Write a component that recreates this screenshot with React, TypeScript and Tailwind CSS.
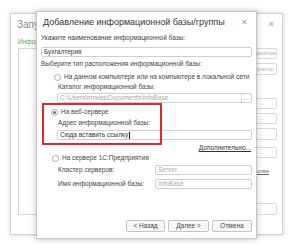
const FONT = { fontFamily: '"Liberation Sans", Arial, sans-serif' };

function Radio({ checked }: { checked?: boolean }) {
  return (
    <span className="flex h-[7px] w-[7px] shrink-0 items-center justify-center rounded-full border border-[#a9a9a9] bg-white">
      {checked && <span className="h-[3px] w-[3px] rounded-full bg-[#3d8f46]" />}
    </span>
  );
}

function Field({ children, muted, className = "" }: { children?: React.ReactNode; muted?: boolean; className?: string }) {
  return (
    <div
      className={`flex h-[10px] items-center overflow-hidden whitespace-nowrap rounded-[2px] border border-[#cfcfcf] bg-white pl-[2px] text-[6.5px] ${
        muted ? "text-[#a8a8a8]" : "text-[#333]"
      } ${className}`}
    >
      {children}
    </div>
  );
}

function Btn({ label, w }: { label: string; w: string }) {
  return (
    <div className={`flex h-[12px] ${w} items-center justify-center rounded-[2px] border border-[#c4c4c4] bg-[#f7f7f7] text-[6.5px] text-[#444]`}>
      {label}
    </div>
  );
}

function BgWindow() {
  return (
    <div className="absolute left-[10px] top-[13px] flex h-[222px] w-[273px] flex-col border border-[#cfcfcf] bg-white shadow-[0_0_5px_rgba(0,0,0,0.18)]">
      <div className="flex h-[21px] items-center justify-between pl-[6px] pr-[8px]">
        <span className="text-[10px] text-[#8a8a8a]">Запуск</span>
        <span className="text-[9px] text-[#999]">×</span>
      </div>
      <div className="flex flex-1 gap-[4px] pb-[19px] pl-[7px] pr-[5px]">
        <div className="flex flex-1 flex-col">
          <span className="h-[13px] whitespace-nowrap text-[6.5px] leading-[13px] text-[#4caf50]">Информ</span>
          <div className="flex-1 border border-[#d6d6d6]" />
        </div>
        <div className="flex w-[70px] flex-col gap-[4px] pt-[13px] text-[6px] text-[#b0b0b0]">
          <div className="flex h-[11px] items-center justify-center whitespace-nowrap rounded-[2px] border border-[#dadada] pl-[22px]">1С:Предприятие</div>
          <div className="flex h-[12px] items-center justify-center whitespace-nowrap rounded-[2px] border border-[#dadada] pl-[24px]">Конфигуратор</div>
          <div className="mt-[19px] flex h-[11px] items-center justify-end rounded-[2px] border border-[#dadada] pr-[12px]">...</div>
          <div className="flex h-[11px] items-center justify-end rounded-[2px] border border-[#dadada] pr-[12px]">...</div>
          <div className="flex h-[12px] items-center justify-end rounded-[2px] border border-[#dadada] pr-[12px]">...</div>
          <div className="mt-[3px] flex h-[11px] items-center justify-end rounded-[2px] border border-[#dadada] pr-[12px]">...</div>
          <div className="mt-[5px] flex justify-end whitespace-nowrap pr-[8px] text-[6px] text-[#666] underline">по ссылке</div>
          <div className="mt-auto h-[12px] rounded-[2px] border border-[#dadada]" />
        </div>
      </div>
    </div>
  );
}

function Dialog() {
  return (
    <div className="absolute left-[36px] top-[11px] flex h-[228px] w-[221px] flex-col whitespace-nowrap border border-[#c6c6c6] bg-white px-[4px] pb-[6px] text-[6.5px] text-[#444] shadow-[0_0_6px_rgba(0,0,0,0.25)]">
      <div className="flex h-[21px] items-center justify-between pl-[2px] pr-[5px]">
        <span className="text-[9px] text-[#333]">Добавление информационной базы/группы</span>
        <span className="text-[9px] text-[#8a8a8a]">×</span>
      </div>
      <div className="flex h-[10px] items-center">Укажите наименование информационной базы:</div>
      <Field className="mt-[4px]">Бухгалтерия</Field>
      <div className="mt-[2px] flex h-[10px] items-center">Выберите тип расположения информационной базы:</div>
      <div className="mt-[3px] flex h-[10px] items-center gap-[3px] pl-[13px]">
        <Radio />
        <span>На данном компьютере или на компьютере в локальной сети</span>
      </div>
      <div className="flex h-[9px] items-center pl-[17px]">Каталог информационной базы:</div>
      <div className="mt-[2px] pl-[16px]">
        <Field muted className="pr-0">
          <span className="flex-1">C:\Users\mrwas\Documents\InfoBase</span>
          <span className="flex h-full w-[10px] items-center justify-center border-l border-[#d6d6d6] text-[6px] text-[#666]">...</span>
        </Field>
      </div>
      <div className="relative">
        <div className="mt-[4px] flex h-[10px] items-center gap-[3px] pl-[10px]">
          <Radio checked />
          <span>На веб-сервере</span>
        </div>
        <div className="mt-[1px] flex h-[10px] items-center pl-[17px]">Адрес информационной базы:</div>
        <div className="mt-[2px] pl-[16px]">
          <Field>
            Сюда вставить ссылку<span className="ml-[1px] h-[7px] w-px bg-[#222]" />
          </Field>
        </div>
        <div className="absolute left-[1px] top-[0px] h-[42px] w-[120px] border-2 border-[#e3262b]" />
      </div>
      <div className="mt-[3px] flex h-[10px] items-center justify-end pr-[1px] text-[#333] underline">Дополнительно...</div>
      <div className="flex h-[10px] items-center gap-[3px] pl-[11px]">
        <Radio />
        <span>На сервере 1С:Предприятия</span>
      </div>
      <div className="mt-[1px] flex h-[11px] items-center pl-[17px]">
        <span className="flex-1">Кластер серверов:</span>
        <Field muted className="w-[97px]">Server</Field>
      </div>
      <div className="mt-[3px] flex h-[11px] items-center pl-[17px]">
        <span className="flex-1">Имя информационной базы:</span>
        <Field muted className="w-[97px]">InfoBase</Field>
      </div>
      <div className="mt-auto flex justify-end gap-[3px]">
        <Btn label="< Назад" w="w-[39px]" />
        <Btn label="Далее >" w="w-[41px]" />
        <Btn label="Отмена" w="w-[40px]" />
      </div>
    </div>
  );
}

export default function App() {
  return (
    <div className="relative h-[247px] w-[300px] overflow-hidden bg-white" style={FONT}>
      <BgWindow />
      <Dialog />
    </div>
  );
}
